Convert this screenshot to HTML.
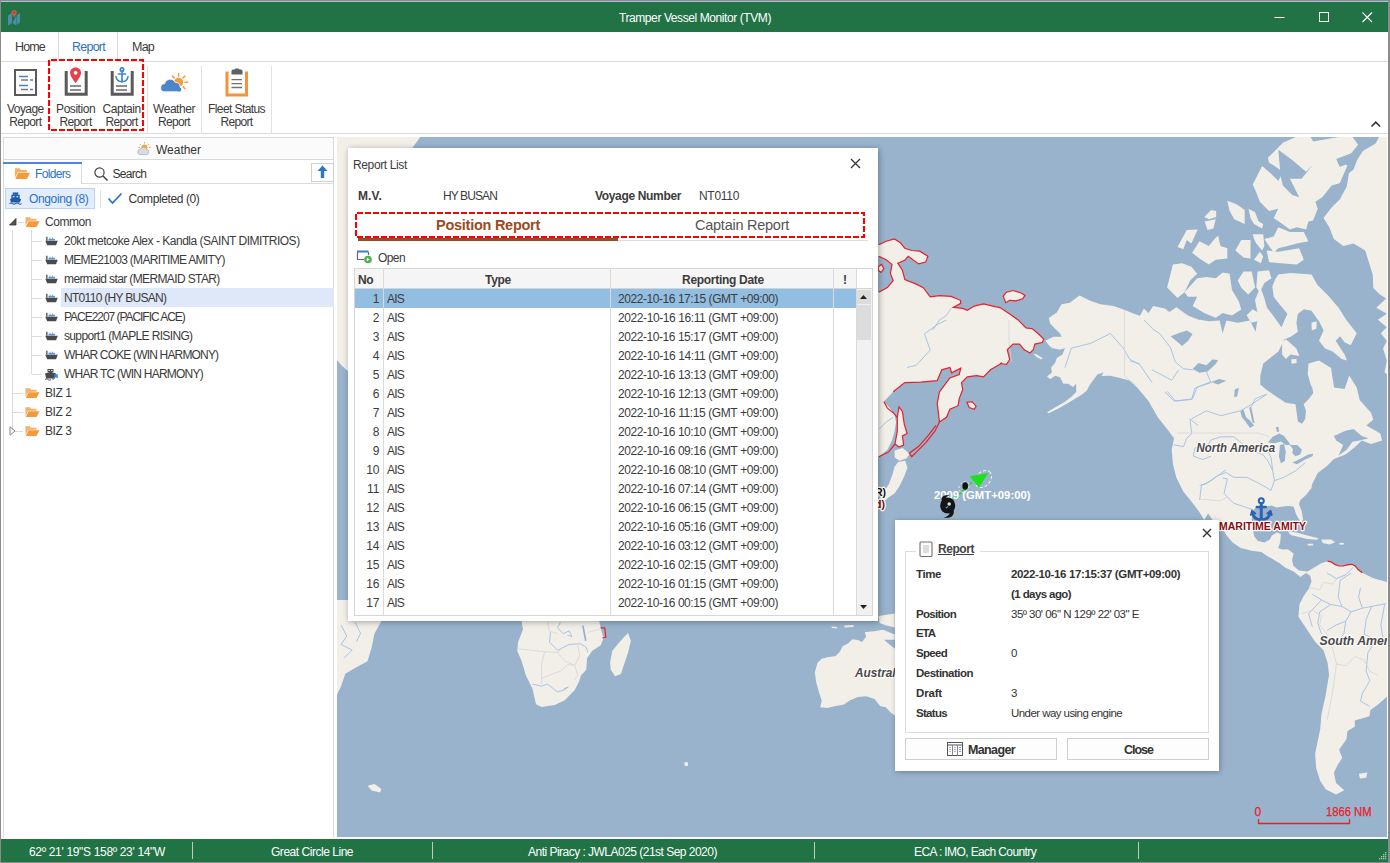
<!DOCTYPE html>
<html><head><meta charset="utf-8"><title>Tramper Vessel Monitor (TVM)</title>
<style>
*{box-sizing:border-box;margin:0;padding:0}
html,body{width:1390px;height:863px;overflow:hidden;background:#fff}
body{font-family:"Liberation Sans",sans-serif;font-size:12px;color:#3c3c3c;position:relative}
.abs{position:absolute}
.t{position:absolute;white-space:nowrap;line-height:14px}
#frame{position:absolute;left:0;top:0;width:1390px;height:863px;border:1px solid #8b8b8b;border-right-width:2px;pointer-events:none;z-index:50}
#titlebar{position:absolute;left:1px;top:1px;width:1387px;height:31px;background:#217346;border-top:1px solid #a9c4dc}
#title{position:absolute;left:0;width:1390px;top:11px;text-align:center;color:#fff;font-size:12px;line-height:14px}
#tabs{position:absolute;left:1px;top:32px;width:1387px;height:29px;background:#fff}
#tabline{position:absolute;left:1px;top:61px;width:1387px;height:1px;background:#dadada;z-index:3}
.tab{position:absolute;top:1px;height:29px;line-height:29px;font-size:12.5px;color:#3b3b3b;white-space:nowrap}
#ribbon{position:absolute;left:1px;top:61px;width:1387px;height:73px;background:#fff;border-bottom:1px solid #dadada}
.rb{position:absolute;font-size:12px;line-height:14px;text-align:center;color:#3a3a3a}
.rbt{font-size:12px;color:#3a3a3a}
.vsep{position:absolute;width:1px;background:#e1e1e1}
#status{position:absolute;left:1px;top:839px;width:1387px;height:23px;background:#217346;color:#fff}
#status .t{top:5px;color:#fff;font-size:12px}
#status .sep{position:absolute;top:3px;height:17px;width:1px;background:#b8cfc1}
/* left panel */
#left{position:absolute;left:1px;top:135px;width:335px;height:704px;background:#fff}
.tree{position:absolute;font-size:12px;letter-spacing:-.450px;line-height:14px;white-space:nowrap;color:#3a3a3a}
/* map */
#map{position:absolute;left:337px;top:137px;width:1050px;height:700px;background:#99b3cc;overflow:hidden}
/* dialogs */
#rl{position:absolute;left:348px;top:148px;width:530px;height:473px;background:#fff;box-shadow:1px 1px 6px 0 rgba(0,0,0,.33)}
#rp{position:absolute;left:895px;top:520px;width:324px;height:251px;background:#fff;box-shadow:1px 1px 5px 0 rgba(0,0,0,.3)}
.b{font-weight:bold}
#rl .t,#status .t,.rbt{margin-top:1px}
</style></head>
<body>
<div id="titlebar"></div>
<div id="title"><span style="display: inline-block; letter-spacing: -0.41px;">Tramper Vessel Monitor (TVM)</span></div>
<svg class="abs" style="left:1270px;top:8px" width="110" height="20" viewBox="0 0 110 20">
 <path d="M4.500 9.500h10" stroke="#fff" stroke-width="1"></path>
 <rect x="49.500" y="4.500" width="9" height="9" fill="none" stroke="#fff" stroke-width="1"></rect>
 <path d="M92.500 4.500l9.500 9.500M102 4.500l-9.500 9.500" stroke="#fff" stroke-width="1.100"></path>
</svg>
<svg class="abs" style="left:6px;top:8px" width="16" height="20" viewBox="0 0 16 20">
 <path d="M2 7.500l4-2.500v10l-4 2.500zM6.500 15l3.500 2.200V8M10.500 17l3.500-2.500V5l-3.500 2.500z" fill="#4a8cab"></path>
 <path d="M8.200 2c-1.500 0-2.600 1.100-2.600 2.500 0 1.700 2.600 4.700 2.600 4.700s2.600-3 2.600-4.700c0-1.400-1.100-2.500-2.600-2.500z" fill="#d9534a"></path><circle cx="8.200" cy="4.400" r=".9" fill="#217346"></circle>
</svg>
<div id="tabs">
 <div class="tab" style="left: 14px; letter-spacing: -0.84px;">Home</div>
 <div class="abs" style="left:57px;top:0;width:60px;height:30px;border-left:1px solid #dcdcdc;border-right:1px solid #dcdcdc;background:#fff"></div>
 <div class="tab" style="left: 71px; color: rgb(42, 114, 200); letter-spacing: -0.76px;">Report</div>
 <div class="tab" style="left: 131px; letter-spacing: -0.78px;">Map</div>
</div>
<div id="tabline"></div><div class="abs" style="left:59px;top:61px;width:58px;height:1px;background:#fff;z-index:4"></div><div id="ribbon">
 <!-- voyage icon -->
 <svg class="abs" style="left:12px;top:7px" width="26" height="30" viewBox="0 0 26 30">
  <rect x="2" y="2" width="21" height="25" fill="#fff" stroke="#5a5a5a" stroke-width="2"></rect>
  <path d="M6 8.5h9M6 17.5h9" stroke="#3f86d2" stroke-width="1.6"></path>
  <path d="M8 12h7M8 21.5h7" stroke="#7a7a7a" stroke-width="1.6"></path>
  <path d="M17 12h3M17 21.5h3" stroke="#3f86d2" stroke-width="1.6"></path>
 </svg>
 <!-- position icon -->
 <svg class="abs" style="left:62px;top:4px" width="28" height="33" viewBox="0 0 28 33">
  <path d="M3.2 6v23.3h20V6" fill="none" stroke="#5a5a5a" stroke-width="3"></path>
  <path d="M7 21h11M7 25h11" stroke="#6a6a6a" stroke-width="1.5"></path>
  <path d="M12.6 2.5c-3.2 0-5.5 2.4-5.5 5.4 0 3.6 5.5 10 5.5 10s5.5-6.400 5.500-10c0-3-2.300-5.400-5.500-5.400z" fill="#e8414b"></path>
  <circle cx="12.600" cy="7.800" r="1.900" fill="#fff"></circle>
 </svg>
 <!-- captain icon -->
 <svg class="abs" style="left:108px;top:4px" width="28" height="33" viewBox="0 0 28 33">
  <path d="M3.200 6v23.300h20V6" fill="none" stroke="#5a5a5a" stroke-width="3"></path>
  <path d="M7 21h11M7 25h11" stroke="#6a6a6a" stroke-width="1.500"></path>
  <g fill="none" stroke="#3f86d2" stroke-width="1.700" stroke-linecap="round">
   <circle cx="13" cy="4.500" r="1.700"></circle>
   <path d="M13 6.200v10.500M9.500 9h7"></path>
   <path d="M7 11.500c.500 3.500 3 5.200 6 5.200s5.500-1.700 6-5.200"></path>
  </g>
 </svg>
 <!-- weather icon -->
 <svg class="abs" style="left:155px;top:7px" width="36" height="30" viewBox="156 68 36 30">
  <g stroke="#f59b3a" stroke-width="1.500" stroke-linecap="round"><path d="M178.600 73.500v2.500M172.400 76.100l1.800 1.800M184.800 76.100l-1.800 1.800M185 82.300h2.500M183.200 86.900l1.800 1.800"></path></g>
  <circle cx="178.600" cy="82.300" r="4.600" fill="#f59b3a"></circle>
  <path d="M164.800 91.800a4 4 0 0 1 -.3 -8a5.600 5.600 0 0 1 10.600 -1.300a4.200 4.200 0 0 1 5 4.600a2.500 2.500 0 0 1 -2.300 4.700z" fill="#4a86c8" stroke="#fff" stroke-width=".800"></path>
 </svg>
 <!-- fleet icon -->
 <svg class="abs" style="left:221px;top:5px" width="30" height="32" viewBox="0 0 30 32">
  <path d="M5 5.500V29h19.500V5.500" fill="#fff" stroke="#f5923a" stroke-width="3"></path>
  <path d="M9.500 5a1.500 1.500 0 0 1 1.500-1.500h1.500l1-1h3l1 1h1.500a1.500 1.500 0 0 1 1.500 1.500v3.500h-11z" fill="#606060"></path>
  <path d="M9.500 13.700h10.500M9.500 17.600h10.500M9.500 21.500h10.500" stroke="#707070" stroke-width="1.300"></path>
 </svg>
 <div class="t rbt" style="left: 6.1px; top: 40px; letter-spacing: -0.59px;">Voyage</div><div class="t rbt" style="left: 8.3px; top: 53px; letter-spacing: -0.67px;">Report</div>
 <div class="t rbt" style="left: 55.1px; top: 40px; letter-spacing: -0.46px;">Position</div><div class="t rbt" style="left: 58.6px; top: 53px; letter-spacing: -0.67px;">Report</div>
 <div class="t rbt" style="left: 101.6px; top: 40px; letter-spacing: -0.48px;">Captain</div><div class="t rbt" style="left: 104.6px; top: 53px; letter-spacing: -0.67px;">Report</div>
 <div class="t rbt" style="left: 152px; top: 40px; letter-spacing: -0.45px;">Weather</div><div class="t rbt" style="left: 157px; top: 53px; letter-spacing: -0.67px;">Report</div>
 <div class="t rbt" style="left: 207px; top: 40px; letter-spacing: -0.59px;">Fleet Status</div><div class="t rbt" style="left: 219.5px; top: 53px; letter-spacing: -0.67px;">Report</div>
 <div class="vsep" style="left:146px;top:5px;height:68px"></div>
 <div class="vsep" style="left:200px;top:5px;height:68px"></div>
 <div class="vsep" style="left:270px;top:5px;height:68px"></div>
 <svg class="abs" style="left:47px;top:-2px;z-index:5" width="98" height="73" viewBox="0 0 98 73"><rect x="1" y="1" width="94" height="70" fill="none" stroke="#ff0000" stroke-width="2.100" stroke-dasharray="6 2" stroke-dashoffset="-2"></rect></svg>
 <svg class="abs" style="left:1369px;top:59px" width="12" height="8" viewBox="0 0 12 8"><path d="M1.500 6.500l4.300-4.300 4.300 4.300" fill="none" stroke="#333" stroke-width="1.600"></path></svg>
</div>
<div id="left">
<div class="abs" style="left:2px;top:2px;width:331px;height:701px;border-left:1px solid #dcdcdc;border-right:1px solid #dcdcdc"></div>
<div class="abs" style="left:2px;top:2px;width:331px;height:23px;background:#fbfbfb;border:1px solid #d9d9d9"></div>
<svg class="abs" style="left:135px;top:7px" width="16" height="14" viewBox="0 0 16 14"><circle cx="8.500" cy="5.500" r="3" fill="#f5a740"></circle><g stroke="#f5a740" stroke-width="1"><path d="M8.500 0v1.500M3.800 2l1 1M13.200 2l-1 1M13 5.500h1.500M2.500 5.500H4"></path></g><path d="M4 12.500a2.500 2.500 0 0 1 .3-5a3.500 3.500 0 0 1 6.500-.200a2.700 2.700 0 0 1 .2 5.200z" fill="#d9dde3" stroke="#9aa3ad" stroke-width=".600"></path></svg>
<div class="t" style="left: 155px; top: 8px; font-size: 12px; color: rgb(51, 51, 51); letter-spacing: -0.02px;">Weather</div>
<div class="abs" style="left:2px;top:27px;width:79px;height:2px;background:#4d86dc"></div>
<div class="abs" style="left:80px;top:29px;width:253px;height:20px;border-left:1px solid #dcdcdc;border-bottom:1px solid #dcdcdc"></div>
<svg class="abs" style="left:13px;top:32px" width="17" height="13" viewBox="0 0 15 12"><path d="M.500 1.200h4.300l1.200 1.600h5.500v2H3.200L.500 10z" fill="#f7b066"></path><path d="M3.500 5.200h11L11.500 11H.800z" fill="#f39a3a"></path></svg>
<div class="t" style="left: 34px; top: 32px; color: rgb(42, 114, 200); font-size: 12px; letter-spacing: -0.65px;">Folders</div>
<svg class="abs" style="left:92px;top:31px" width="16" height="16" viewBox="0 0 16 16"><circle cx="6.500" cy="6.500" r="4.600" fill="none" stroke="#444" stroke-width="1.200"></circle><path d="M10 10l4.500 4.500" stroke="#444" stroke-width="1.600"></path></svg>
<div class="t" style="left: 111.5px; top: 32px; color: rgb(51, 51, 51); font-size: 12px; letter-spacing: -0.74px;">Search</div>
<div class="abs" style="left:310px;top:28px;width:23px;height:19px;border:1px solid #d0d0d0;background:#fdfdfd"></div>
<svg class="abs" style="left:316px;top:30px" width="11" height="14" viewBox="0 0 11 14"><path d="M5.500 .500L10.500 6H7.200v7H3.800V6H.500z" fill="#2f74c6"></path></svg>
<div class="abs" style="left:4px;top:53px;width:90px;height:21px;background:#e4edfb;border:1px solid #bcd2f0"></div>
<svg class="abs" style="left:8px;top:57px" width="13" height="13" viewBox="0 0 14 14"><path d="M4 .500h6v2.500H4z" fill="#1f5aa6"></path><path d="M2.500 3h9v4l1.500 .800-1.300 3.500H2.300L1 7.800 2.500 7z" fill="#1f5aa6"></path><path d="M4 4.500h2v1.200H4zM8 4.500h2v1.200H8z" fill="#fff"></path><path d="M.500 12.500c1.100-.900 2.100-.900 3.200 0s2.200.900 3.300 0 2.200-.900 3.300 0 2.200.900 3.200 0" stroke="#1f5aa6" fill="none" stroke-width="1.100"></path></svg>
<div class="t" style="left: 28px; top: 57px; color: rgb(42, 114, 200); font-size: 12px; letter-spacing: -0.36px;">Ongoing (8)</div>
<div class="abs" style="left:99px;top:55px;width:1px;height:18px;background:#e0e0e0"></div>
<svg class="abs" style="left:106px;top:57px" width="16" height="13" viewBox="0 0 16 13"><path d="M1.500 6.500l4 4.500L14.500 1.500" fill="none" stroke="#2f74c6" stroke-width="1.800"></path></svg>
<div class="t" style="left: 127.5px; top: 57px; color: rgb(51, 51, 51); font-size: 12px; letter-spacing: -0.39px;">Completed (0)</div>
<div class="abs" style="left:11px;top:95px;width:1px;height:201px;background:#dcdcdc"></div>
<div class="abs" style="left:30px;top:95px;width:1px;height:144px;background:#dcdcdc"></div>
<div class="abs" style="left:17px;top:87px;width:6px;height:1px;background:#dcdcdc"></div>
<svg class="abs" style="left:8px;top:83px" width="8" height="8" viewBox="0 0 8 8"><path d="M7 .500V7H.500z" fill="#555" stroke="#333" stroke-width=".800"></path></svg>
<svg class="abs" style="left:24px;top:81px" width="15" height="12" viewBox="0 0 15 12"><path d="M.500 1.200h4.300l1.200 1.600h5.500v2H3.200L.500 10z" fill="#f7b066"></path><path d="M3.500 5.200h11L11.500 11H.800z" fill="#f39a3a"></path></svg>
<div class="tree" style="left:44px;top:80px">Common</div>
<div class="abs" style="left:31px;top:106px;width:10px;height:1px;background:#dcdcdc"></div>
<svg class="abs" style="left:44px;top:101px" width="13" height="10" viewBox="0 0 13 10"><path d="M.300 4.800h12.500l-1.800 4.400H2.200z" fill="#4a4a4a"></path><path d="M1.200.800h1.300v4H1.200z" fill="#4a4a4a"></path><path d="M3.500 2.800h6.500v1.800H3.500z" fill="#5b93d6"></path><path d="M4.500 1.800h1v1h-1zM7 1.800h1v1H7z" fill="#5b93d6"></path></svg>
<div class="tree" style="left: 63px; top: 99px; letter-spacing: -0.49px;">20kt metcoke Alex - Kandla (SAINT DIMITRIOS)</div>
<div class="abs" style="left:31px;top:125px;width:10px;height:1px;background:#dcdcdc"></div>
<svg class="abs" style="left:44px;top:120px" width="13" height="10" viewBox="0 0 13 10"><path d="M.300 4.800h12.500l-1.800 4.400H2.200z" fill="#4a4a4a"></path><path d="M1.200.800h1.300v4H1.200z" fill="#4a4a4a"></path><path d="M3.500 2.800h6.500v1.800H3.500z" fill="#5b93d6"></path><path d="M4.500 1.800h1v1h-1zM7 1.800h1v1H7z" fill="#5b93d6"></path></svg>
<div class="tree" style="left: 63px; top: 118px; letter-spacing: -0.69px;">MEME21003 (MARITIME AMITY)</div>
<div class="abs" style="left:31px;top:144px;width:10px;height:1px;background:#dcdcdc"></div>
<svg class="abs" style="left:44px;top:139px" width="13" height="10" viewBox="0 0 13 10"><path d="M.300 4.800h12.500l-1.800 4.400H2.200z" fill="#4a4a4a"></path><path d="M1.200.800h1.300v4H1.200z" fill="#4a4a4a"></path><path d="M3.500 2.800h6.500v1.800H3.500z" fill="#5b93d6"></path><path d="M4.500 1.800h1v1h-1zM7 1.800h1v1H7z" fill="#5b93d6"></path></svg>
<div class="tree" style="left: 63px; top: 137px; letter-spacing: -0.62px;">mermaid star (MERMAID STAR)</div>
<div class="abs" style="left:60px;top:153px;width:273px;height:19px;background:#dfe8f8"></div>
<div class="abs" style="left:31px;top:163px;width:10px;height:1px;background:#dcdcdc"></div>
<svg class="abs" style="left:44px;top:158px" width="13" height="10" viewBox="0 0 13 10"><path d="M.300 4.800h12.500l-1.800 4.400H2.200z" fill="#4a4a4a"></path><path d="M1.200.800h1.300v4H1.200z" fill="#4a4a4a"></path><path d="M3.500 2.800h6.500v1.800H3.500z" fill="#5b93d6"></path><path d="M4.500 1.800h1v1h-1zM7 1.800h1v1H7z" fill="#5b93d6"></path></svg>
<div class="tree" style="left: 63px; top: 156px; letter-spacing: -0.7px;">NT0110 (HY BUSAN)</div>
<div class="abs" style="left:31px;top:182px;width:10px;height:1px;background:#dcdcdc"></div>
<svg class="abs" style="left:44px;top:177px" width="13" height="10" viewBox="0 0 13 10"><path d="M.300 4.800h12.500l-1.800 4.400H2.200z" fill="#4a4a4a"></path><path d="M1.200.800h1.300v4H1.200z" fill="#4a4a4a"></path><path d="M3.500 2.800h6.500v1.800H3.500z" fill="#5b93d6"></path><path d="M4.500 1.800h1v1h-1zM7 1.800h1v1H7z" fill="#5b93d6"></path></svg>
<div class="tree" style="left: 63px; top: 175px; letter-spacing: -1.04px;">PACE2207 (PACIFIC ACE)</div>
<div class="abs" style="left:31px;top:201px;width:10px;height:1px;background:#dcdcdc"></div>
<svg class="abs" style="left:44px;top:196px" width="13" height="10" viewBox="0 0 13 10"><path d="M.300 4.800h12.500l-1.800 4.400H2.200z" fill="#4a4a4a"></path><path d="M1.200.800h1.300v4H1.200z" fill="#4a4a4a"></path><path d="M3.500 2.800h6.500v1.800H3.500z" fill="#5b93d6"></path><path d="M4.500 1.800h1v1h-1zM7 1.800h1v1H7z" fill="#5b93d6"></path></svg>
<div class="tree" style="left: 63px; top: 194px; letter-spacing: -0.65px;">support1 (MAPLE RISING)</div>
<div class="abs" style="left:31px;top:220px;width:10px;height:1px;background:#dcdcdc"></div>
<svg class="abs" style="left:44px;top:215px" width="13" height="10" viewBox="0 0 13 10"><path d="M.300 4.800h12.500l-1.800 4.400H2.200z" fill="#4a4a4a"></path><path d="M1.200.800h1.300v4H1.200z" fill="#4a4a4a"></path><path d="M3.500 2.800h6.500v1.800H3.500z" fill="#5b93d6"></path><path d="M4.500 1.800h1v1h-1zM7 1.800h1v1H7z" fill="#5b93d6"></path></svg>
<div class="tree" style="left: 63px; top: 213px; letter-spacing: -0.83px;">WHAR COKE (WIN HARMONY)</div>
<div class="abs" style="left:31px;top:239px;width:10px;height:1px;background:#dcdcdc"></div>
<svg class="abs" style="left:43px;top:233px" width="15" height="13" viewBox="0 0 15 13"><path d="M1 5.500l5.500-1.800 5.500 1.800-1.300 5H2.300z" fill="#4a4a4a"></path><path d="M3.500 1h6v3h-6z" fill="#4a4a4a"></path><path d="M4.500 2h1.300v1H4.500zM7.200 2h1.300v1H7.200z" fill="#fff"></path><path d="M1 11.500c1-.8 2-.8 3 0s2 .8 3 0" stroke="#4a4a4a" fill="none"></path><path d="M8.500 11.500l4-4M10 7h3v3" stroke="#3f86d2" stroke-width="1.500" fill="none"></path></svg>
<div class="tree" style="left: 63px; top: 232px; letter-spacing: -0.77px;">WHAR TC (WIN HARMONY)</div>
<div class="abs" style="left:12px;top:258px;width:10px;height:1px;background:#dcdcdc"></div>
<svg class="abs" style="left:24px;top:252px" width="15" height="12" viewBox="0 0 15 12"><path d="M.500 1.200h4.300l1.200 1.600h5.500v2H3.200L.500 10z" fill="#f7b066"></path><path d="M3.500 5.200h11L11.500 11H.800z" fill="#f39a3a"></path></svg>
<div class="tree" style="left:44px;top:251px">BIZ 1</div>
<div class="abs" style="left:12px;top:277px;width:10px;height:1px;background:#dcdcdc"></div>
<svg class="abs" style="left:24px;top:271px" width="15" height="12" viewBox="0 0 15 12"><path d="M.500 1.200h4.300l1.200 1.600h5.500v2H3.200L.500 10z" fill="#f7b066"></path><path d="M3.500 5.200h11L11.500 11H.800z" fill="#f39a3a"></path></svg>
<div class="tree" style="left:44px;top:270px">BIZ 2</div>
<div class="abs" style="left:12px;top:296px;width:10px;height:1px;background:#dcdcdc"></div>
<svg class="abs" style="left:24px;top:290px" width="15" height="12" viewBox="0 0 15 12"><path d="M.500 1.200h4.300l1.200 1.600h5.500v2H3.200L.500 10z" fill="#f7b066"></path><path d="M3.500 5.200h11L11.500 11H.800z" fill="#f39a3a"></path></svg>
<div class="tree" style="left:44px;top:289px">BIZ 3</div>
<svg class="abs" style="left:8px;top:291px" width="7" height="10" viewBox="0 0 7 10"><path d="M1 .800L6 5 1 9.200z" fill="#fff" stroke="#888" stroke-width="1"></path></svg>
</div>
<div id="map"><!--MAP--><svg class="abs" style="left:0;top:0" width="1050" height="700" viewBox="0 0 1050 700">
<g>
<path fill="#99b3cc" d="M541.8 119.3L549.2 122.8L555.0 127.4L553.4 136.7L556.2 143.6L550.4 150.6L541.8 155.2L533.0 155.2L533.0 119.3Z"></path>
<path fill="#f2efe9" d="M541.1 129.7L544.6 127.4L546.9 131.6L544.1 135.5L541.3 133.2Z"></path>
<path fill="#f2efe9" d="M742.5 158.4L753.8 164.1L763.6 167.3L776.6 169.0L787.9 173.0L797.6 177.1L803.0 178.7L806.9 171.4L811.5 176.1L816.2 169.1L827.8 171.4L832.4 174.9L839.3 170.3L850.9 178.4L862.5 183.0L863.0 182.7L872.0 184.2L882.6 183.5L885.6 196.3L889.4 183.5L900.7 185.7L912.7 183.5L918.7 194.8L921.0 178.2L918.0 163.1L923.3 150.3L927.0 160.1L930.0 170.7L935.3 177.4L944.4 190.3L950.4 176.7L942.9 167.7L936.8 160.1L935.3 149.6L938.3 142.0L941.4 137.5L953.4 136.0L974.5 137.5L980.5 148.1L991.1 158.6L1001.6 170.7L1009.2 182.7L1019.7 196.3L1013.7 208.3L1007.6 205.3L1003.1 199.3L998.6 203.8L1007.6 217.4L1009.9 223.4L1004.6 221.9L995.6 214.4L988.1 211.4L982.0 203.8L986.6 193.3L982.0 184.2L974.5 173.7L967.0 172.2L960.9 176.7L959.4 185.7L960.9 194.8L953.4 200.0L947.4 202.3L941.4 214.4L933.8 220.4L926.3 226.4L923.3 238.5L923.3 247.5L929.3 252.7L939.0 259.2L948.7 265.7L958.5 267.3L960.9 284.4L964.9 286.8L968.2 281.9L969.0 273.8L966.6 267.3L971.4 262.5L976.3 256.0L974.7 247.9L974.5 250.5L970.7 237.0L971.5 226.4L982.0 223.4L994.1 230.9L995.6 241.5L997.1 250.5L1007.6 252.0L1012.2 238.5L1019.7 250.5L1022.7 263.0L1034.0 275.7L1036.3 282.6L1029.4 288.4L1043.3 296.5L1045.1 303.5L1034.0 307.0L1024.7 303.5L1018.9 309.3L1008.5 317.4L996.9 322.0L990.0 329.0L980.7 335.9L976.1 345.2L972.6 352.2L975.9 341.3L974.5 351.1L969.0 358.0L963.4 362.9L962.0 367.1L964.8 374.7L966.2 383.1L963.4 384.5L959.2 377.5L956.5 369.4L950.9 368.9L945.3 369.4L939.8 370.6L934.2 368.5L928.6 369.4L923.1 368.9L918.9 369.9L915.4 374.7L914.7 383.1L915.4 391.4L917.5 399.8L921.0 403.9L927.3 405.6L932.8 402.6L934.9 398.4L939.8 395.6L943.9 397.0L943.2 405.3L941.2 410.9L945.3 412.6L950.9 412.3L956.5 416.5L955.1 423.4L956.5 429.0L962.0 433.4L970.4 434.5L977.3 430.4L984.3 426.2L991.2 424.1L998.2 427.6L1006.5 429.3L1014.9 427.6L1021.8 433.2L1026.0 436.2L1037.1 441.5L1050.4 445.0L1051.1 445.8L1051.1 558.5L1049.0 560.5L1040.7 567.8L1033.4 573.1L1032.4 579.3L1017.8 583.5L1017.8 589.7L1010.5 593.9L1009.4 602.2L1002.1 612.7L1005.2 621.0L1001.1 627.3L996.9 635.6L999.0 646.0L1007.3 653.3L999.0 657.5L988.6 652.3L983.3 644.0L979.2 631.4L978.1 616.8L980.2 606.4L983.3 591.8L984.4 577.2L988.6 558.5L991.7 539.7L994.8 523.0L992.7 543.0L990.6 525.7L986.5 513.2L978.1 504.8L969.8 492.3L961.4 479.8L962.5 467.3L966.7 458.9L971.9 451.6L974.5 444.3L973.2 438.7L969.0 435.9L963.4 440.1L956.5 434.5L948.1 430.4L942.6 426.2L935.6 422.0L928.6 417.9L924.5 415.1L914.7 413.7L903.6 410.9L895.3 405.3L889.7 398.4L885.5 391.4L881.3 385.9L877.2 378.9L873.0 373.3L867.2 383.0L862.5 375.3L855.6 366.1L846.3 354.5L839.3 340.6L835.9 326.7L834.7 312.8L837.0 301.2L830.1 291.9L820.8 280.3L811.5 264.1L800.0 250.2L799.3 250.1L792.8 243.6L783.0 241.1L773.3 238.7L764.4 239.0L766.8 235.5L760.3 237.4L756.8 242.4L753.0 247.6L749.8 253.6L745.7 257.0L739.2 261.1L731.1 266.0L721.4 271.5L711.7 276.3L710.0 275.2L719.8 269.5L727.9 264.7L734.4 259.8L739.2 254.9L739.2 246.8L736.0 250.1L731.1 246.8L726.3 246.8L723.0 240.3L718.2 238.7L713.3 242.0L710.0 239.5L714.9 235.5L714.1 230.6L718.2 225.7L719.8 220.9L725.5 217.6L727.9 211.1L723.0 212.8L714.9 211.1L711.7 207.9L708.4 203.8L716.5 199.8L724.6 199.8L723.0 196.5L718.2 191.7L713.3 186.8L711.7 181.1L719.8 175.4L724.6 167.3L732.8 165.7Z"></path>
<path fill="#f2efe9" d="M859.3 358.8L865.5 358.8L875.9 375.5L881.2 385.9L879.1 388.0L871.8 377.6L863.4 367.2Z"></path>
<path fill="#99b3cc" d="M833.6 199.2L842.8 195.7L849.8 193.4L855.6 196.9L850.9 203.9L845.1 209.0L840.5 205.0Z"></path>
<path fill="#99b3cc" d="M855.6 232.1L861.4 225.9L869.5 228.2L875.3 222.4L881.1 222.9L878.7 227.0L870.6 234.4L862.5 235.8Z"></path>
<path fill="#99b3cc" d="M874.1 245.1L882.2 242.1L889.2 243.7L881.1 247.4Z"></path>
<path fill="#99b3cc" d="M897.7 252.5L901.9 250.7L900.1 259.5L897.3 259.9Z"></path>
<path fill="#99b3cc" d="M996.9 298.9L1008.5 293.8L1016.6 291.9L1024.7 298.9L1031.7 301.2L1022.4 303.5L1015.5 304.7L1009.7 312.8L1001.6 318.6L1006.2 308.1L999.2 303.5Z"></path>
<path fill="#f2efe9" d="M950.9 394.2L959.2 395.6L970.4 398.4L981.5 401.2L980.1 402.8L970.4 402.1L962.0 400.0L953.7 398.0Z"></path>
<path fill="#f2efe9" d="M984.3 402.6L994.0 402.6L998.2 405.3L992.6 407.4L985.7 406.0Z"></path>
<path fill="#f2efe9" d="M970.4 406.7L975.9 406.7L976.2 408.4L971.1 408.4Z"></path>
<path fill="#f2efe9" d="M1002.4 405.9L1006.8 405.9L1006.8 407.6L1002.4 407.6Z"></path>
<path fill="#f2efe9" d="M1021.9 636.7L1030.3 635.6L1029.2 640.8L1023.0 641.5Z"></path>
<path fill="#f2efe9" d="M930.9 20.8L945.9 5.7L958.7 -0.0L973.7 -0.0L976.1 4.6L1001.6 -0.0L1015.5 -0.0L1021.3 8.1L1015.5 16.2L1001.6 23.1L1010.8 27.8L1002.7 46.3L994.6 48.6L985.3 60.2L978.4 64.8L980.7 71.8L976.1 83.4L971.4 84.5L969.1 92.6L959.8 90.3L952.9 92.6L943.6 85.7L936.7 81.1L941.3 71.8L932.0 74.1L922.8 64.8L919.3 55.6L915.8 47.5L925.1 28.9L934.4 37.0L941.3 44.0L945.9 34.7L932.0 25.4Z"></path>
<path fill="#99b3cc" d="M941.3 12.7L955.2 23.1L969.1 34.7L976.1 27.8L964.5 41.7L952.9 41.7L962.2 60.2L955.2 57.9L945.9 48.6L943.6 39.3Z"></path>
<path fill="#99b3cc" d="M999.2 22.0L1014.3 16.2L1021.3 7.4L1034.0 25.4L1024.7 17.3L1015.5 30.1L1008.5 27.8L1002.7 30.1Z"></path>
<path fill="#f2efe9" d="M1025.9 13.9L1038.6 6.4L1042.1 -0.0L1050.2 -0.0L1050.2 162.2L1045.6 155.2L1038.6 145.9L1034.0 132.0L1028.2 113.5L1016.6 106.5L1006.2 108.9L996.9 101.9L992.3 90.3L986.5 81.1L994.6 70.6L1002.7 62.5L1009.7 49.8L1012.0 35.9L1016.6 32.4L1020.1 23.1Z"></path>
<path fill="#f2efe9" d="M867.2 79.9L874.1 72.9L879.2 74.1L879.2 79.9L871.8 82.2Z"></path>
<path fill="#f2efe9" d="M867.6 84.5L878.7 82.2L876.4 91.5L870.6 93.1Z"></path>
<path fill="#f2efe9" d="M840.5 110.0L849.8 93.1L860.7 92.6L854.4 106.5L849.8 103.1L846.3 112.3Z"></path>
<path fill="#f2efe9" d="M855.1 115.8L862.5 104.2L871.8 108.9L877.6 101.9L881.1 98.4L883.4 108.9L890.3 111.2L890.3 121.6L878.7 122.8L871.8 127.4L862.5 121.6Z"></path>
<path fill="#f2efe9" d="M890.3 63.7L899.6 67.2L907.7 72.9L907.7 86.9L897.3 82.2L892.6 74.1Z"></path>
<path fill="#f2efe9" d="M911.6 71.8L918.1 75.3L921.6 84.5L926.2 86.9L925.1 91.5L917.0 86.9L913.5 81.1Z"></path>
<path fill="#f2efe9" d="M898.4 113.5L904.2 103.1L913.5 103.1L913.5 121.6L906.5 120.5Z"></path>
<path fill="#f2efe9" d="M915.8 97.3L926.2 97.3L927.4 108.9L925.1 113.5L919.3 106.5L917.0 101.9Z"></path>
<path fill="#f2efe9" d="M917.0 122.8L922.8 114.7L926.2 119.3L923.9 126.2Z"></path>
<path fill="#f2efe9" d="M927.4 101.9L936.7 99.6L941.3 90.3L952.9 95.0L966.8 95.0L971.4 104.2L959.8 106.5L950.6 108.9L941.3 111.2L936.7 115.8L932.0 108.9Z"></path>
<path fill="#f2efe9" d="M929.7 113.5L941.3 114.7L962.2 111.2L966.8 122.8L959.8 127.4L943.6 126.2L932.0 125.1Z"></path>
<path fill="#f2efe9" d="M830.1 150.6L835.9 127.4L845.1 126.2L854.4 129.7L860.2 136.7L853.2 143.6L847.5 155.2L840.5 161.0Z"></path>
<path fill="#f2efe9" d="M847.5 155.2L860.2 141.3L869.5 140.1L878.7 141.3L885.7 135.5L892.6 136.7L895.0 152.9L901.9 164.5L904.2 172.6L895.0 178.4L885.7 176.1L878.7 180.7L867.2 176.1L855.6 169.1L860.2 159.8L850.9 159.8Z"></path>
<path fill="#f2efe9" d="M900.8 143.6L906.5 134.4L914.7 134.4L918.1 150.6L911.2 157.5L904.2 150.6Z"></path>
<path fill="#f2efe9" d="M920.5 134.4L932.0 133.2L934.4 141.3L927.4 145.9L922.8 155.2L919.3 150.6Z"></path>
<path fill="#f2efe9" d="M945.1 205.3L948.9 202.3L959.4 211.4L962.4 218.9L953.4 217.4L948.9 221.9L945.1 217.4Z"></path>
<path fill="#f2efe9" d="M954.2 222.2L959.4 221.9L959.7 226.1L954.6 226.7Z"></path>
<path fill="#f2efe9" d="M974.5 185.7L979.8 184.2L979.3 191.8L974.8 193.3Z"></path>
<path fill="#f2efe9" d="M1035.5 130.0L1036.3 151.1L1042.3 157.1L1049.1 161.6L1039.3 170.7L1049.8 176.7L1040.8 182.7L1049.8 190.3L1043.8 196.3L1049.8 203.8L1046.1 211.4L1049.8 223.4L1047.6 235.5L1051.3 238.5L1051.3 130.0Z"></path>
<path fill="#f2efe9" d="M909.7 178.2L915.7 172.2L923.3 176.7L920.3 184.2L914.2 185.7Z"></path>
<path fill="#f2efe9" d="M533.0 107.7L541.8 107.7L549.2 104.2L557.3 101.9L563.1 105.4L567.8 111.2L574.7 113.5L582.8 114.2L590.9 119.3L588.6 125.1L581.7 126.9L575.9 122.8L571.2 119.3L567.8 123.2L560.8 126.2L565.4 133.2L567.8 142.5L579.3 147.1L586.3 150.6L593.2 159.8L602.5 158.7L614.1 159.4L623.4 163.3L623.8 166.3L616.4 170.3L625.7 171.4L630.3 173.3L637.3 169.1L646.5 166.8L658.1 169.6L663.0 170.6L672.7 177.1L680.8 182.7L689.0 190.9L695.4 191.7L701.1 196.5L706.8 202.2L705.2 205.5L697.9 207.1L696.3 212.8L693.0 216.0L687.3 212.8L682.5 207.1L676.0 207.1L670.3 212.8L672.7 222.5L669.5 227.4L663.0 226.5L665.1 225.9L653.5 232.8L646.5 239.8L639.6 238.6L630.3 239.8L624.5 245.6L625.7 252.5L622.2 261.8L621.1 268.7L612.9 272.2L609.5 280.3L602.5 285.0L600.2 266.4L602.5 254.8L612.9 240.9L622.2 237.5L623.8 231.2L614.6 235.8L612.9 230.5L604.8 232.8L600.2 243.7L584.0 245.1L567.8 245.6L556.2 254.8L546.9 264.6L552.7 271.1L557.3 276.9L559.0 285.0L557.6 294.2L555.0 303.5L550.4 312.8L541.8 319.7L533.0 319.7Z"></path>
<path fill="#99b3cc" d="M541.8 119.3L549.2 122.8L555.0 127.4L553.4 136.7L556.2 143.6L550.4 150.6L541.8 155.2L533.0 155.2L533.0 119.3Z"></path>
<path fill="#f2efe9" d="M541.1 129.7L544.6 127.4L546.9 131.6L544.1 135.5L541.3 133.2Z"></path>
<path fill="#f2efe9" d="M666.2 159.2L669.5 155.2L676.0 153.5L684.1 156.0L688.1 158.4L685.7 161.7L679.2 163.8L672.7 163.3L668.7 165.7Z"></path>
<path fill="#f2efe9" d="M696.3 216.8L699.5 217.3L705.5 220.9L704.4 222.5L699.5 220.1Z"></path>
<path fill="#f2efe9" d="M562.0 269.9L565.4 274.5L567.3 287.3L570.1 296.5L565.4 298.9L566.6 308.1L562.0 310.0L558.0 307.0L560.3 294.2L560.3 280.3Z"></path>
<path fill="#f2efe9" d="M629.9 265.3L635.0 264.6L639.1 269.2L637.3 272.2L632.2 270.6Z"></path>
<path fill="#f2efe9" d="M557.7 313.4L565.8 311.1L572.8 316.9L569.3 321.5L562.4 323.8L557.7 320.4Z"></path>
<path fill="#f2efe9" d="M561.2 325.0L568.1 323.8L570.5 330.8L567.0 340.0L562.4 349.3L557.7 356.2L550.8 360.9L546.1 365.5L542.7 370.1L536.9 372.4L536.9 365.5L541.5 363.2L546.1 356.2L551.9 347.0L555.4 337.7L557.7 329.6Z"></path>
<path fill="#f2efe9" d="M541.5 478.9L557.7 476.6L557.7 490.5L548.5 488.2L542.7 485.9Z"></path>
<path fill="#f2efe9" d="M532.3 495.1L546.1 492.8L557.7 497.4L557.7 502.8L532.3 502.8Z"></path>
<path fill="#f2efe9" d="M-7.0 463.0L48.6 463.0L44.4 483.9L37.5 496.4L34.7 510.3L30.5 524.2L18.0 531.1L8.3 536.7L4.1 549.2L-0.0 557.5L-7.0 557.5Z"></path>
<path fill="#f2efe9" d="M184.6 472.2L184.6 484.5L186.0 492.4L181.0 505.3L180.3 514.0L184.6 524.0L188.9 538.4L195.4 551.4L199.0 567.2L204.7 570.1L217.7 567.9L227.7 563.2L237.8 553.1L242.1 544.5L243.9 538.4L249.3 532.7L250.1 521.2L255.1 514.0L263.7 508.2L266.6 501.0L264.0 492.4L262.3 484.5L262.3 472.2Z"></path>
<path fill="#99b3cc" d="M245.0 488.8L246.7 488.5L249.6 503.6L247.9 504.2Z"></path>
<path fill="#f2efe9" d="M30.5 648.7L37.5 647.1L44.4 652.1L43.0 655.4L34.7 653.5Z"></path>
<path fill="#f2efe9" d="M291.1 496.0L293.9 503.9L291.1 515.4L286.7 528.4L283.9 537.0L278.1 539.2L273.8 532.7L273.1 525.5L275.2 514.0L282.4 505.3L287.5 499.6Z"></path>
<path fill="#f2efe9" d="M480.5 525.8L484.7 521.7L490.3 520.3L498.6 518.9L502.8 514.7L505.6 509.2L511.1 506.4L515.3 502.2L520.9 502.9L525.0 505.0L529.2 499.4L527.8 495.2L533.4 494.6L540.3 495.9L546.6 496.6L547.3 502.9L552.8 507.8L558.4 511.9L568.1 514.7L568.1 584.2L558.4 578.7L554.2 575.9L548.7 570.3L543.1 568.9L537.6 562.0L529.2 559.2L520.9 559.9L512.5 563.4L507.0 567.6L498.6 568.9L490.3 571.0L483.3 570.3L484.7 563.4L481.9 555.0L479.2 545.3L477.8 535.6Z"></path>
<path fill="#f2efe9" d="M494.4 489.4L500.0 490.0L500.3 491.6L495.1 491.1Z"></path>
<path fill="#f2efe9" d="M507.0 488.6L516.7 488.0L516.4 490.0L507.7 490.5Z"></path>
<path fill="#f2efe9" d="M549.4 479.3L554.2 477.9L555.6 484.1L550.8 485.8Z"></path>
<path fill="#f2efe9" d="M347.2 625.4L350.6 625.1L351.1 628.7L347.8 629.0Z"></path>
<path fill="#f2efe9" d="M0.0 -7.0L85.0 -7.0L84.0 -1.0L75.0 11.5L12.0 11.5L12.0 235.0L5.0 229.0L0.0 223.0Z"></path>
<path fill="#99b3cc" d="M930.9 305.4L935.7 299.8L942.2 296.5L947.1 299.0L951.2 304.6L953.6 307.9L948.7 307.9L943.9 304.6L937.4 306.3Z"></path>
<path fill="#99b3cc" d="M943.0 307.9L947.1 307.1L948.7 314.4L947.9 324.1L943.9 326.5L941.9 319.2Z"></path>
<path fill="#99b3cc" d="M952.8 307.9L960.1 307.9L964.9 312.7L963.3 317.6L958.5 319.2L955.2 316.0L956.0 311.9Z"></path>
<path fill="#99b3cc" d="M955.2 325.7L964.9 320.9L971.4 317.6L976.3 316.8L975.5 319.2L968.2 322.5L960.1 327.3Z"></path>
<path fill="#99b3cc" d="M939.0 290.0L941.4 289.7L942.2 294.6L939.8 294.9Z"></path>
<path fill="#99b3cc" d="M903.3 274.6L906.5 272.2L909.0 280.3L913.0 283.6L917.1 288.4L913.0 290.9L909.0 285.2L904.9 280.3Z"></path>
<path fill="#99b3cc" d="M912.2 270.6L914.2 269.8L917.6 286.0L915.5 285.5Z"></path>
</g><g fill="none" stroke="#9fbee3" stroke-width=".9">
<path d="M934.1 353.3L937.4 343.6L935.7 333.8L930.9 324.1L926.0 317.6L916.3 314.4L906.5 307.9L896.8 299.8L883.8 299.8L874.1 303.0L870.9 307.9L857.9 311.1L856.3 319.2L866.0 322.5L874.1 319.2"></path>
<path d="M935.7 333.8L934.1 320.9L929.3 311.1L922.8 304.6"></path>
<path d="M937.4 343.6L947.1 340.3L958.5 333.8L968.2 325.7"></path>
<path d="M934.1 353.3L922.8 346.8L909.8 340.3L896.8 340.3L888.7 335.5L880.6 338.7L869.2 346.8L862.7 348.4"></path>
<path d="M916.3 372.8L906.5 369.5L896.8 366.3L887.1 356.5L890.3 341.9L885.5 341.1"></path>
<path d="M862.7 363.0L864.4 348.4L874.1 343.6L888.7 333.0"></path>
<path d="M836.8 307.9L846.5 309.5L849.8 301.4L854.6 296.5L853.0 281.9L861.1 288.4"></path>
<path d="M830.3 254.4L838.4 264.1L854.6 262.5L857.9 251.1L874.1 244.6"></path>
<path d="M854.6 281.9L869.2 273.8L883.8 278.7L903.3 273.8L914.7 267.3L929.3 257.6"></path>
<path d="M727.9 230.6L734.4 211.1L753.8 206.3L773.3 196.5L786.3 211.1L792.8 222.5L803.0 227.4"></path>
<path d="M1049.5 466.6L1034.6 469.4L1025.4 471.2L1014.2 474.9L1004.9 469.4L993.8 467.5L984.5 462.9L975.3 457.3"></path>
<path d="M1014.2 474.9L1008.7 484.2L999.4 487.9L990.1 493.5"></path>
<path d="M1025.4 471.2L1021.6 460.1L1023.5 450.8"></path>
<path d="M1004.9 469.4L1001.2 460.1L1003.1 443.4L1014.2 436.0"></path>
<path d="M1034.6 469.4L1029.1 482.4L1027.2 497.2L1034.6 500.9"></path>
<path d="M993.8 467.5L982.7 474.9L980.8 486.1L984.5 497.2"></path>
<path d="M984.5 462.9L971.6 476.8L975.3 489.8"></path>
<path d="M1016.1 430.4L1008.7 437.8L999.4 441.6L990.1 436.0"></path>
<path d="M1040.2 500.9L1030.9 515.8L1029.1 534.3L1032.8 543.6L1025.4 556.6L1023.5 564.0L1032.8 569.6"></path>
<path d="M1008.7 484.2L1006.8 497.2L1001.2 502.8"></path>
<path d="M1047.6 467.5L1043.9 487.9L1045.8 500.9"></path>
<path d="M223.4 485.2L220.6 490.9L226.3 496.7L232.1 493.8L234.9 499.6L230.6 498.1"></path>
<path d="M213.4 495.3L212.6 505.3L220.6 513.3L232.1 507.5L243.6 506.8L249.3 510.4L250.8 515.4"></path>
<path d="M195.4 547.1L204.7 549.2L210.5 547.1L220.6 555.0L227.7 552.8L231.3 549.9L226.3 552.1"></path>
<path d="M4.1 488.0L9.7 499.1L4.1 507.5L15.2 513.0L6.9 521.4"></path>
<path d="M18.0 485.2L23.6 496.4L19.4 504.7"></path>
<path d="M570.1 230.5L579.3 228.2L593.2 213.1L587.5 196.9L600.2 187.6L609.5 183.0"></path>
<path d="M542.3 291.9L549.2 285.0L556.2 280.3"></path>
<path d="M595.6 193.0L602.5 183.0L609.5 178.4L614.1 171.4"></path>
<path d="M806.9 183.0L816.2 192.3L823.1 196.9L833.6 210.8L838.2 224.7L846.3 231.7L855.6 232.8"></path>
<path d="M869.5 235.1L872.9 243.2L874.1 245.6"></path>
<path d="M793.0 223.6L802.3 227.0L815.0 245.6"></path>
<path d="M815.0 232.8L834.7 243.2L841.7 232.8"></path>
<path d="M827.8 254.8L837.0 264.1L855.6 261.8L860.2 250.2L874.1 245.6"></path>
<path d="M929.7 257.2L918.1 261.8L913.5 271.1"></path>
</g><g fill="none" stroke="#d9d3d6" stroke-width=".8">
<path d="M840.0 296.0L921.1 296.0L927.6 298.2L932.5 299.8"></path>
<path d="M862.7 362.2L883.8 363.8L890.3 359.8"></path>
<path d="M787.6 173.0L787.6 238.7L792.8 243.6L799.3 248.4"></path>
<path d="M995.7 512.1L999.4 526.9L1008.7 528.8L1017.9 519.5L1027.2 523.2L1032.8 534.3L1040.2 538.0"></path>
<path d="M999.4 526.9L997.5 541.7L994.7 560.3L990.1 583.1"></path>
<path d="M971.6 450.8L982.7 452.7L986.4 445.3L995.7 447.1L1001.2 439.7"></path>
<path d="M964.1 476.8L975.3 473.1L984.5 478.7L982.7 487.9L990.1 497.2L995.7 512.1"></path>
<path d="M181.7 511.8L207.6 514.7L220.6 515.4L226.3 509.7"></path>
<path d="M207.6 514.7L204.7 526.9L204.7 547.1"></path>
<path d="M204.7 541.3L211.9 538.4L223.4 534.1L230.6 527.6L237.8 528.4L240.7 538.4L237.8 542.7"></path>
<path d="M220.6 515.4L227.7 524.0L237.8 528.4L242.9 518.3L240.7 508.2"></path>
<path d="M210.5 484.5L211.9 493.8L220.6 496.7"></path>
<path d="M250.8 495.3L262.3 492.4"></path>
<path d="M672.0 183.0L672.0 206.2L674.4 224.7"></path>
</g><g fill="none" stroke="#e8202a" stroke-width="1.2">
<path d="M541.8 119.3L549.2 122.8L555.0 127.4L553.4 136.7L556.2 143.6L550.4 150.6L541.8 155.2"></path>
<path d="M541.1 129.7L544.6 127.4L546.9 131.6L544.1 135.5L541.3 133.2Z"></path>
<path d="M990.5 424.1L994.0 424.8L998.2 427.6L1002.4 429.0L1006.5 429.0L1010.7 427.6L1014.9 427.3L1018.4 429.0L1021.1 432.5L1025.3 435.7"></path>
<path d="M541.8 107.7L549.2 104.2L557.3 101.9L563.1 105.4L567.8 111.2L574.7 113.5L582.8 114.2L590.9 119.3L588.6 125.1L581.7 126.9L575.9 122.8L571.2 119.3L567.8 123.2L560.8 126.2L565.4 133.2L567.8 142.5L579.3 147.1L586.3 150.6L593.2 159.8L602.5 158.7L614.1 159.4L623.4 163.3L623.8 166.3L616.4 170.3L625.7 171.4L630.3 173.3L637.3 169.1L646.5 166.8L658.1 169.6L663.0 170.6L672.7 177.1L680.8 182.7L689.0 190.9L695.4 191.7L701.1 196.5L706.8 202.2L705.2 205.5L697.9 207.1L696.3 212.8L693.0 216.0L687.3 212.8L682.5 207.1L676.0 207.1L670.3 212.8L672.7 222.5L669.5 227.4L663.0 226.5L665.1 225.9L653.5 232.8L646.5 239.8L639.6 238.6L630.3 239.8L624.5 245.6L625.7 252.5L622.2 261.8L621.1 268.7L612.9 272.2L609.5 280.3L602.5 285.0L600.2 266.4L602.5 254.8L612.9 240.9L622.2 237.5L623.8 231.2L614.6 235.8L612.9 230.5L604.8 232.8L600.2 243.7L584.0 245.1L567.8 245.6L556.2 254.8"></path>
<path d="M666.2 159.2L669.5 155.2L676.0 153.5L684.1 156.0L688.1 158.4L685.7 161.7L679.2 163.8L672.7 163.3L668.7 165.7Z"></path>
<path d="M602.5 285.0L597.9 294.2L588.6 305.8L579.3 315.1L574.7 319.7L572.4 316.2L581.7 309.3L590.9 298.9L599.0 288.4"></path>
<path d="M562.0 269.9L565.4 274.5L567.3 287.3L570.1 296.5L565.4 298.9L566.6 308.1L562.0 310.0L558.0 307.0L560.3 294.2L560.3 280.3Z"></path>
<path d="M546.9 264.6L550.4 271.1L556.2 275.7L560.3 280.3"></path>
<path d="M558.0 307.0L551.5 315.1L541.8 319.7"></path>
<path d="M629.9 265.3L635.0 264.6L639.1 269.2L637.3 272.2L632.2 270.6Z"></path>
<path d="M263.7 490.9L267.7 490.9L268.8 500.3L265.4 501.0"></path>
</g></svg><!--/MAP--><svg class="abs" style="left:0;top:0" width="1050" height="700" viewBox="337 137 1050 700" font-family="Liberation Sans, sans-serif">
<g font-weight="bold" font-style="italic" font-size="12.5" fill="#4a4a4a" paint-order="stroke" stroke="#fff" stroke-width="2.4" stroke-linejoin="round" stroke-opacity=".75">
<text x="1196.500" y="451.500" textLength="78.500" lengthAdjust="spacingAndGlyphs">North America</text>
<text x="1319.500" y="644.500" textLength="86" lengthAdjust="spacingAndGlyphs">South America</text>
<text x="855" y="677" textLength="50.5" lengthAdjust="spacingAndGlyphs">Australia</text>
</g>
<g transform="translate(1261.300,509.500)" fill="none" stroke="#2a62b6" stroke-linecap="round"><circle cx="0" cy="-8.800" r="2.500" stroke-width="2"></circle><path d="M0 -6V10" stroke-width="3"></path><path d="M-4.500 -2.500H4.500" stroke-width="2.400"></path><path d="M-9 2.500C-8 8.500 -4 10.500 0 10.500S8 8.500 9 2.500" stroke-width="3"></path><path d="M-10.500 5.500l1.300-4 3.200 2.500M10.500 5.500l-1.300-4-3.200 2.500" stroke-width="1.800"></path></g>
<text x="1219" y="530" font-weight="bold" font-size="10.500" fill="#8a0c10" paint-order="stroke" stroke="#fff" stroke-width="2.4" stroke-linejoin="round" textLength="87" lengthAdjust="spacingAndGlyphs">MARITIME AMITY</text>
<path d="M948 505L972 482" stroke="#22dd22" stroke-width="1.800" stroke-dasharray="3 2"></path>
<ellipse cx="983.300" cy="479" rx="9.500" ry="7" transform="rotate(-50 983.300 479)" fill="none" stroke="#fff" stroke-width="1" stroke-dasharray="3 2" opacity=".9"></ellipse>
<ellipse cx="964" cy="487" rx="6" ry="4.500" transform="rotate(-50 964 487)" fill="none" stroke="#fff" stroke-width=".800" stroke-dasharray="2 2" opacity=".8"></ellipse>
<path d="M988.500 473L969.700 476.200L978.800 487.800Z" fill="#1fe01f"></path>
<text x="934" y="498.500" font-weight="bold" font-size="10" fill="#fff" textLength="96.500" lengthAdjust="spacingAndGlyphs">2009 (GMT+09:00)</text>
<ellipse cx="965.200" cy="486" rx="2.800" ry="3.800" fill="#111"></ellipse>
<g transform="translate(947.700,506.500)"><ellipse cx="0" cy="-1" rx="7.500" ry="8" fill="#151515"></ellipse><path d="M-6 -6C-7 -11 -2 -12 2 -11C-2 -10 -3 -8 -2 -5zM6 4C7 10 2 12 -4 11C0 10 3 8 2 4z" fill="#151515"></path><circle cx="1.500" cy="-2.500" r="1.800" fill="#ddd"></circle><path d="M-2 1.500l2.500-1.500" stroke="#35b0e8" stroke-width="1.200"></path></g>
<text x="875" y="496" font-weight="bold" font-size="10.500" fill="#111" paint-order="stroke" stroke="#fff" stroke-width="2.4" stroke-linejoin="round">R)</text>
<text x="875" y="508" font-weight="bold" font-size="10.500" fill="#6a1010" paint-order="stroke" stroke="#fff" stroke-width="2.4" stroke-linejoin="round">d)</text>
<path d="M1258.500 819v4.500h91V819" fill="none" stroke="#e8202a" stroke-width="1.300"></path>
<g font-size="12" fill="#e8202a" stroke="#e8202a" stroke-width=".250"><text x="1254.500" y="816">0</text><text x="1326" y="816" textLength="45.500" lengthAdjust="spacingAndGlyphs">1866 NM</text></g>
</svg></div>
<div id="rl">
<div class="t " style="left: 5px; top: 9px; letter-spacing: -0.37px;">Report List</div>
<svg class="abs" style="left:502px;top:10px" width="11" height="11" viewBox="0 0 11 11"><path d="M1 1l9 9M10 1l-9 9" stroke="#333" stroke-width="1.300"></path></svg>
<div class="t b" style="left: 10px; top: 40px; letter-spacing: 0.11px;">M.V.</div>
<div class="t " style="left: 95px; top: 40px; letter-spacing: -0.89px;">HY BUSAN</div>
<div class="t b" style="left: 247px; top: 40px; letter-spacing: -0.34px;">Voyage Number</div>
<div class="t " style="left: 351px; top: 40px; letter-spacing: -0.3px;">NT0110</div>
<div class="t b" style="left: 88px; top: 67px; font-size: 14.5px; line-height: 18px; color: rgb(156, 74, 32); letter-spacing: -0.26px;">Position Report</div>
<div class="t" style="left: 347px; top: 67px; font-size: 14.5px; line-height: 18px; color: rgb(85, 85, 85); letter-spacing: -0.25px;">Captain Report</div>
<div class="abs" style="left:10px;top:92px;width:510px;height:1px;background:#dcdcdc"></div>
<div class="abs" style="left:10px;top:90px;width:260px;height:3px;background:#9a4a24"></div>
<svg class="abs" style="left:7px;top:64px" width="512" height="27" viewBox="0 0 512 27"><rect x="1" y="1" width="508" height="24" fill="none" stroke="#ff0000" stroke-width="2.100" stroke-dasharray="6 2" stroke-dashoffset="-1"></rect></svg>
<svg class="abs" style="left:8px;top:101px" width="17" height="15" viewBox="0 0 17 15"><path d="M1 2.500h11.500" stroke="#3d7dca" stroke-width="2"></path><path d="M1.500 3v7.500H8M12.500 3v3" stroke="#666" stroke-width="1.200" fill="none"></path><circle cx="12" cy="10.500" r="3.800" fill="#4caf50"></circle><path d="M10.800 8.600l3 1.900-3 1.900z" fill="#fff"></path></svg>
<div class="t " style="left: 30px; top: 102px; letter-spacing: -0.59px;">Open</div>
<div class="abs" style="left:6px;top:120px;width:519px;height:348px;border:1px solid #d6d6d6;background:#fff"></div>
<div class="abs" style="left:7px;top:121px;width:501px;height:20px;background:#f5f5f5;border-bottom:1px solid #d4d4d4"></div>
<div class="abs" style="left:7px;top:141px;width:501px;height:19px;background:#92bee2"></div>
<div class="abs" style="left:35px;top:121px;width:1px;height:346px;background:#dadada"></div>
<div class="abs" style="left:262px;top:121px;width:1px;height:346px;background:#dadada"></div>
<div class="abs" style="left:485px;top:121px;width:1px;height:346px;background:#dadada"></div>
<div class="abs" style="left:508px;top:121px;width:1px;height:346px;background:#dadada"></div>
<div class="abs" style="left:508px;top:140px;width:16px;height:1px;background:#d4d4d4"></div>
<div class="t b" style="left: 10px; top: 124px; letter-spacing: -0.5px;">No</div>
<div class="t b" style="left: 137px; top: 124px; letter-spacing: -0.28px;">Type</div>
<div class="t b" style="left: 334px; top: 124px; letter-spacing: -0.29px;">Reporting Date</div>
<div class="t b" style="left:495px;top:124px;">!</div>
<div class="t" style="left:8px;top:143px;width:23.5px;text-align:right">1</div>
<div class="t " style="left: 39px; top: 143px; letter-spacing: -0.78px;">AIS</div>
<div class="t " style="left: 270px; top: 143px; letter-spacing: -0.44px;">2022-10-16 17:15 (GMT +09:00)</div>
<div class="t" style="left:8px;top:162px;width:23.5px;text-align:right">2</div>
<div class="t " style="left: 39px; top: 162px; letter-spacing: -0.78px;">AIS</div>
<div class="t " style="left: 270px; top: 162px; letter-spacing: -0.41px;">2022-10-16 16:11 (GMT +09:00)</div>
<div class="t" style="left:8px;top:181px;width:23.5px;text-align:right">3</div>
<div class="t " style="left: 39px; top: 181px; letter-spacing: -0.78px;">AIS</div>
<div class="t " style="left: 270px; top: 181px; letter-spacing: -0.44px;">2022-10-16 15:17 (GMT +09:00)</div>
<div class="t" style="left:8px;top:200px;width:23.5px;text-align:right">4</div>
<div class="t " style="left: 39px; top: 200px; letter-spacing: -0.78px;">AIS</div>
<div class="t " style="left: 270px; top: 200px; letter-spacing: -0.41px;">2022-10-16 14:11 (GMT +09:00)</div>
<div class="t" style="left:8px;top:219px;width:23.5px;text-align:right">5</div>
<div class="t " style="left: 39px; top: 219px; letter-spacing: -0.78px;">AIS</div>
<div class="t " style="left: 270px; top: 219px; letter-spacing: -0.44px;">2022-10-16 13:13 (GMT +09:00)</div>
<div class="t" style="left:8px;top:238px;width:23.5px;text-align:right">6</div>
<div class="t " style="left: 39px; top: 238px; letter-spacing: -0.78px;">AIS</div>
<div class="t " style="left: 270px; top: 238px; letter-spacing: -0.44px;">2022-10-16 12:13 (GMT +09:00)</div>
<div class="t" style="left:8px;top:257px;width:23.5px;text-align:right">7</div>
<div class="t " style="left: 39px; top: 257px; letter-spacing: -0.78px;">AIS</div>
<div class="t " style="left: 270px; top: 257px; letter-spacing: -0.41px;">2022-10-16 11:15 (GMT +09:00)</div>
<div class="t" style="left:8px;top:276px;width:23.5px;text-align:right">8</div>
<div class="t " style="left: 39px; top: 276px; letter-spacing: -0.78px;">AIS</div>
<div class="t " style="left: 270px; top: 276px; letter-spacing: -0.44px;">2022-10-16 10:10 (GMT +09:00)</div>
<div class="t" style="left:8px;top:295px;width:23.5px;text-align:right">9</div>
<div class="t " style="left: 39px; top: 295px; letter-spacing: -0.78px;">AIS</div>
<div class="t " style="left: 270px; top: 295px; letter-spacing: -0.44px;">2022-10-16 09:16 (GMT +09:00)</div>
<div class="t" style="left:8px;top:314px;width:23.5px;text-align:right">10</div>
<div class="t " style="left: 39px; top: 314px; letter-spacing: -0.78px;">AIS</div>
<div class="t " style="left: 270px; top: 314px; letter-spacing: -0.44px;">2022-10-16 08:10 (GMT +09:00)</div>
<div class="t" style="left:8px;top:333px;width:23.5px;text-align:right">11</div>
<div class="t " style="left: 39px; top: 333px; letter-spacing: -0.78px;">AIS</div>
<div class="t " style="left: 270px; top: 333px; letter-spacing: -0.44px;">2022-10-16 07:14 (GMT +09:00)</div>
<div class="t" style="left:8px;top:352px;width:23.5px;text-align:right">12</div>
<div class="t " style="left: 39px; top: 352px; letter-spacing: -0.78px;">AIS</div>
<div class="t " style="left: 270px; top: 352px; letter-spacing: -0.44px;">2022-10-16 06:15 (GMT +09:00)</div>
<div class="t" style="left:8px;top:371px;width:23.5px;text-align:right">13</div>
<div class="t " style="left: 39px; top: 371px; letter-spacing: -0.78px;">AIS</div>
<div class="t " style="left: 270px; top: 371px; letter-spacing: -0.44px;">2022-10-16 05:16 (GMT +09:00)</div>
<div class="t" style="left:8px;top:390px;width:23.5px;text-align:right">14</div>
<div class="t " style="left: 39px; top: 390px; letter-spacing: -0.78px;">AIS</div>
<div class="t " style="left: 270px; top: 390px; letter-spacing: -0.44px;">2022-10-16 03:12 (GMT +09:00)</div>
<div class="t" style="left:8px;top:409px;width:23.5px;text-align:right">15</div>
<div class="t " style="left: 39px; top: 409px; letter-spacing: -0.78px;">AIS</div>
<div class="t " style="left: 270px; top: 409px; letter-spacing: -0.44px;">2022-10-16 02:15 (GMT +09:00)</div>
<div class="t" style="left:8px;top:428px;width:23.5px;text-align:right">16</div>
<div class="t " style="left: 39px; top: 428px; letter-spacing: -0.78px;">AIS</div>
<div class="t " style="left: 270px; top: 428px; letter-spacing: -0.44px;">2022-10-16 01:15 (GMT +09:00)</div>
<div class="t" style="left:8px;top:447px;width:23.5px;text-align:right">17</div>
<div class="t " style="left: 39px; top: 447px; letter-spacing: -0.78px;">AIS</div>
<div class="t " style="left: 270px; top: 447px; letter-spacing: -0.44px;">2022-10-16 00:15 (GMT +09:00)</div>
<div class="abs" style="left:509px;top:141px;width:15px;height:326px;background:#f1f1f1"></div>
<div class="abs" style="left:509px;top:142px;width:14px;height:50px;background:#dcdcdc"></div>
<div class="abs" style="left:509px;top:156px;width:14px;height:1px;background:#f1f1f1"></div>
<svg class="abs" style="left:512px;top:147px" width="7" height="4" viewBox="0 0 9 5"><path d="M0 5l4.500-5 4.500 5z" fill="#222"></path></svg>
<svg class="abs" style="left:512px;top:457px" width="7" height="4" viewBox="0 0 9 5"><path d="M0 0l4.500 5 4.500-5z" fill="#222"></path></svg>
</div>
<div id="rp">
<svg class="abs" style="left:307px;top:8px" width="10" height="10" viewBox="0 0 10 10"><path d="M1 1l8 8M9 1l-8 8" stroke="#333" stroke-width="1.400"></path></svg>
<div class="abs" style="left:10px;top:31px;width:304px;height:182px;border:1px solid #dcdcdc"></div>
<div class="abs" style="left:21px;top:25px;width:64px;height:12px;background:#fff"></div>
<svg class="abs" style="left:24px;top:21px" width="14" height="17" viewBox="0 0 14 17"><rect x="1" y="1" width="12" height="14.500" rx="1" fill="#fff" stroke="#707070" stroke-width="1.100"></rect><path d="M4 5h6M4 7h6M4 9h6M4 11h6" stroke="#b5b5b5" stroke-width=".900"></path></svg>
<div class="t b" style="left: 43px; top: 22px; text-decoration: underline; color: rgb(68, 68, 68); letter-spacing: -0.45px;">Report</div>
<div class="t b" style="left: 21px; top: 47px; font-size: 11.5px; color: rgb(51, 51, 51); letter-spacing: -0.41px;">Time</div>
<div class="t b" style="left: 116px; top: 47px; font-size: 11.5px; color: rgb(51, 51, 51); letter-spacing: -0.37px;">2022-10-16 17:15:37 (GMT+09:00)</div>
<div class="t b" style="left: 116px; top: 67px; font-size: 11.5px; color: rgb(51, 51, 51); letter-spacing: -0.59px;">(1 days ago)</div>
<div class="t b" style="left: 21px; top: 87px; font-size: 11.5px; color: rgb(51, 51, 51); letter-spacing: -0.67px;">Position</div>
<div class="t " style="left: 116px; top: 87px; font-size: 11.5px; color: rgb(51, 51, 51); letter-spacing: -0.52px;">35º 30' 06" N 129º 22' 03" E</div>
<div class="t b" style="left: 21px; top: 106px; font-size: 11.5px; color: rgb(51, 51, 51); letter-spacing: -1.05px;">ETA</div>
<div class="t b" style="left: 21px; top: 126px; font-size: 11.5px; color: rgb(51, 51, 51); letter-spacing: -0.7px;">Speed</div>
<div class="t " style="left:116px;top:126px;font-size:11.500px;color:#333">0</div>
<div class="t b" style="left: 21px; top: 146px; font-size: 11.5px; color: rgb(51, 51, 51); letter-spacing: -0.51px;">Destination</div>
<div class="t b" style="left: 21px; top: 166px; font-size: 11.5px; color: rgb(51, 51, 51); letter-spacing: -0.17px;">Draft</div>
<div class="t " style="left:116px;top:166px;font-size:11.500px;color:#333">3</div>
<div class="t b" style="left: 21px; top: 186px; font-size: 11.5px; color: rgb(51, 51, 51); letter-spacing: -0.69px;">Status</div>
<div class="t " style="left: 116px; top: 186px; font-size: 11.5px; color: rgb(51, 51, 51); letter-spacing: -0.56px;">Under way using engine</div>
<div class="abs" style="left:10px;top:218px;width:152px;height:22px;border:1px solid #cfcfcf;background:#fdfdfd"></div>
<div class="abs" style="left:172px;top:218px;width:142px;height:22px;border:1px solid #cfcfcf;background:#fdfdfd"></div>
<svg class="abs" style="left:52px;top:222px" width="16" height="14" viewBox="0 0 16 14"><rect x=".500" y=".500" width="15" height="13" fill="#fff" stroke="#555" stroke-width="1"></rect><path d="M.500 3h15" stroke="#555"></path><path d="M5.500 3v10.500M10.500 3v10.500" stroke="#888"></path><path d="M2 5.500h2M2 7.500h2M2 9.500h2M7 5.500h2M7 7.500h2M7 9.500h2" stroke="#aaa" stroke-width=".800"></path><path d="M12 5.500h2M12 7.500h2M12 9.500h2" stroke="#5b93d6" stroke-width=".900"></path></svg>
<div class="t b" style="left: 73px; top: 223px; font-size: 12.5px; color: rgb(51, 51, 51); letter-spacing: -0.63px;">Manager</div>
<div class="t b" style="left: 229px; top: 223px; font-size: 12.5px; color: rgb(51, 51, 51); letter-spacing: -1.01px;">Close</div>
</div>
<div id="status">
 <div class="t" style="left: 28px; letter-spacing: -0.33px;">62º 21' 19"S 158º 23' 14"W</div>
 <div class="sep" style="left:191px"></div>
 <div class="t" style="left: 270px; letter-spacing: -0.47px;">Great Circle Line</div>
 <div class="sep" style="left:431px"></div>
 <div class="t" style="left: 527px; letter-spacing: -0.52px;">Anti Piracy : JWLA025 (21st Sep 2020)</div>
 <div class="sep" style="left:813px"></div>
 <div class="t" style="left: 913px; letter-spacing: -0.61px;">ECA : IMO, Each Country</div>
 <div class="sep" style="left:1137px"></div><svg class="abs" style="left:1377px;top:12px" width="10" height="10" viewBox="0 0 10 10" fill="#a9c9b6"><rect x="7" y="1" width="1.300" height="1.300"></rect><rect x="5" y="3" width="1.300" height="1.300"></rect><rect x="7" y="3" width="1.300" height="1.300"></rect><rect x="3" y="5" width="1.300" height="1.300"></rect><rect x="5" y="5" width="1.300" height="1.300"></rect><rect x="7" y="5" width="1.300" height="1.300"></rect><rect x="1" y="7" width="1.300" height="1.300"></rect><rect x="3" y="7" width="1.300" height="1.300"></rect><rect x="5" y="7" width="1.300" height="1.300"></rect><rect x="7" y="7" width="1.300" height="1.300"></rect></svg>
</div>
<div id="frame"></div>

</body></html>
